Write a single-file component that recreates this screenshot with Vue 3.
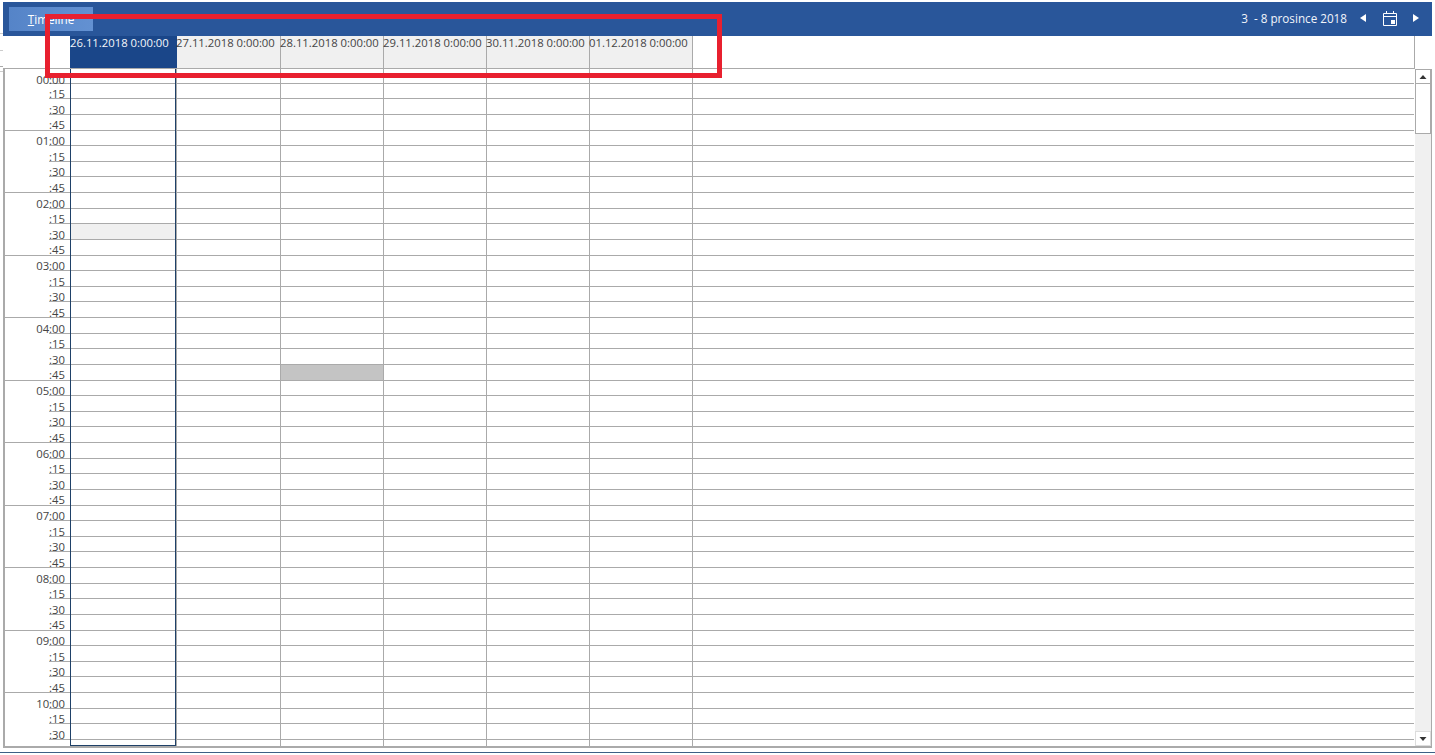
<script setup>
const days = ['26.11.2018 0:00:00','27.11.2018 0:00:00','28.11.2018 0:00:00','29.11.2018 0:00:00','30.11.2018 0:00:00','01.12.2018 0:00:00']
const slots = Array.from({ length: 44 }, (_, i) => {
  const q = i % 4
  const h = Math.floor(i / 4)
  return { i, q, label: q === 0 ? String(h).padStart(2, '0') + ':00' : ':' + q * 15 }
})
function shade(d, i) {
  if (d === 0 && i === 10) return 'light'
  if (d === 2 && i === 19) return 'dark'
  return ''
}
</script>

<template>
  <div class="page">
    <div class="frame">
      <header class="toolbar">
        <button class="tab"><u>T</u>imeline</button>
        <div class="nav">
          <span class="range">3&nbsp; - 8 prosince 2018</span>
          <svg class="arrow" width="8" height="10" viewBox="0 0 8 10"><path d="M7 1v8L1 5z" fill="#fff"/></svg>
          <svg class="cal" width="16" height="17" viewBox="0 0 16 17" fill="none">
            <path d="M1.5 3.500h13v12h-13zM1.500 6.500h13" stroke="#fff"/>
            <path d="M4.500 1v3M11.500 1v3" stroke="#fff"/>
            <rect x="9" y="10" width="4" height="4" fill="#fff"/>
          </svg>
          <svg class="arrow next" width="8" height="10" viewBox="0 0 8 10"><path d="M1 1v8l6-4z" fill="#fff"/></svg>
        </div>
      </header>

      <div class="head">
        <div class="corner"></div>
        <div
          v-for="(d, n) in days"
          :key="d"
          class="hcell"
          :class="{ today: n === 0, first: n === 1 }"
        ><span>{{ d }}</span></div>
        <div class="hrest"></div>
      </div>

      <div class="body">
        <div class="grid">
          <div class="gutter">
            <div
              v-for="s in slots"
              :key="s.i"
              class="slot tick"
              :class="{ end: s.q === 3 }"
            ><span>{{ s.label }}</span></div>
          </div>
          <div
            v-for="(d, n) in days"
            :key="d"
            class="col"
            :class="{ today: n === 0, first: n === 1 }"
          >
            <div
              v-for="s in slots"
              :key="s.i"
              class="slot"
              :class="shade(n, s.i)"
            ></div>
          </div>
          <div class="col rest">
            <div v-for="s in slots" :key="s.i" class="slot"></div>
          </div>
        </div>
        <div class="scrollbar">
          <div class="sbtn"><svg width="8" height="6" viewBox="0 0 8 6"><path d="M4 1l3.500 4H.5z" fill="#333"/></svg></div>
          <div class="thumb"></div>
          <div class="track"></div>
          <div class="sbtn"><svg width="8" height="6" viewBox="0 0 8 6"><path d="M4 5L.5 1h7z" fill="#333"/></svg></div>
        </div>
      </div>
    </div>
    <div class="rule"></div>
    <div class="mark"></div>
  </div>
</template>

<style scoped>
.page {
  position: relative;
  width: 1435px;
  height: 755px;
  overflow: hidden;
  box-sizing: border-box;
  padding: 2px 0 0;
  font-family: "Open Sans", "Noto Sans", sans-serif;
  font-size: 11.3px;
  color: #444;
  background:
    linear-gradient(#ccc, #ccc) 0 33px / 3px 1px no-repeat,
    linear-gradient(#ccc, #ccc) 0 50px / 3px 1px no-repeat,
    linear-gradient(#aaa, #aaa) 0 66px / 3px 1px no-repeat,
    linear-gradient(#ccc, #ccc) 0 71px / 3px 1px no-repeat,
    #fff;
}
.frame {
  margin-left: 3px;
  width: 1429px;
}
.toolbar {
  height: 34px;
  background: #29569a;
  display: flex;
  align-items: center;
  justify-content: space-between;
  box-sizing: border-box;
  padding: 0 0 2px 6px;
  color: #fff;
}
.tab {
  width: 84px;
  height: 24px;
  margin-top: 2px;
  border: 0;
  padding: 0;
  background: linear-gradient(90deg, #5584c8, #6391d2);
  color: #fff;
  font: inherit;
  font-size: 11.7px;
}
.nav {
  display: flex;
  align-items: center;
}
.range {
  font-size: 11.7px;
  color: #f2f5fa;
  margin-right: 12px;
  white-space: nowrap;
}
.arrow { margin-right: 15px; }
.cal { margin-right: 14px; }
.arrow.next { margin-right: 12px; }
.head {
  display: flex;
  height: 33px;
  margin-right: 17px;
  box-sizing: border-box;
  border-bottom: 1px solid #aaa;
}
.corner { width: 67px; }
.hcell {
  flex: none;
  width: 103px;
  box-sizing: border-box;
  background: #f0f0f0;
  border-right: 1px solid #aaa;
  white-space: nowrap;
  line-height: 14px;
}
.hcell span { display: block; margin-left: -1px; }
.hcell.today {
  width: 107px;
  background: #1a4689;
  color: #f4f6fa;
  border-right: 0;
}
.hcell.today span { margin-left: 0; }
.hcell.first { width: 104px; }
.hrest {
  flex: 1;
  border-right: 1px solid #aaa;
}
.body {
  display: flex;
  height: 679px;
  box-sizing: border-box;
  border-left: 2px solid #aaa;
  border-right: 1px solid #aaa;
  border-bottom: 2px solid #aaa;
}
.grid {
  flex: 1;
  display: flex;
  overflow: hidden;
}
.gutter {
  width: 65px;
  flex: none;
}
.slot {
  height: 15.625px;
  box-sizing: border-box;
  border-bottom: 1px solid #aaa;
}
.slot:first-child { height: 14.625px; }
.tick {
  border-bottom: 0;
  background: linear-gradient(#aaa, #aaa) right bottom / 21px 1px no-repeat;
  text-align: right;
  padding-right: 5px;
  line-height: 12px;
  padding-top: 4.500px;
  white-space: nowrap;
}
.tick:first-child { padding-top: 5px; }
.tick.end { background: linear-gradient(#aaa, #aaa) right bottom / 100% 1px no-repeat; }
.col {
  flex: none;
  width: 103px;
  box-sizing: border-box;
  border-right: 1px solid #aaa;
}
.col.today {
  width: 107px;
  position: relative;
}
.col.today::after {
  content: "";
  position: absolute;
  left: 0;
  top: 0;
  width: 104px;
  height: 676px;
  border: solid #1f4168;
  border-width: 0 1px 1px 1px;
  pointer-events: none;
}
.col.first { width: 104px; }
.col.rest {
  flex: 1;
  border-right: 0;
}
.light { background: #f0f0f0; }
.dark { background: #c4c4c4; }
.scrollbar {
  width: 16px;
  margin-left: 1px;
  display: flex;
  flex-direction: column;
  background: #f0f0f0;
  flex: none;
}
.sbtn {
  height: 15px;
  box-sizing: border-box;
  background: #fff;
  border: 1px solid #ddd;
  display: flex;
  align-items: center;
  justify-content: center;
  flex: none;
}
.scrollbar .sbtn:first-child { border-color: #aaa; }
.thumb {
  height: 50px;
  box-sizing: border-box;
  background: #fff;
  border: 1px solid #aaa;
  border-top: 0;
  flex: none;
}
.track { flex: 1; }
.rule {
  height: 1px;
  margin-top: 4px;
  background: #3d5f85;
}
.mark {
  position: absolute;
  left: 45px;
  top: 14px;
  width: 677px;
  height: 64px;
  box-sizing: border-box;
  border: 5px solid #e8202f;
  pointer-events: none;
}
</style>
